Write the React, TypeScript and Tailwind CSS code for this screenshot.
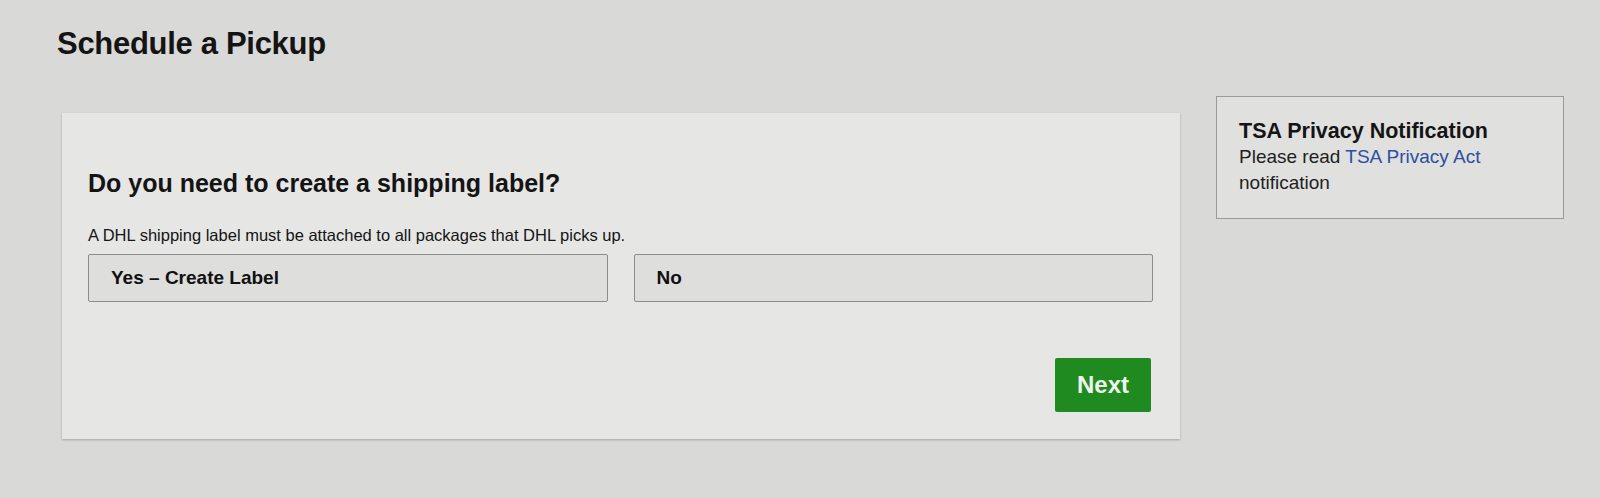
import React from 'react';

const App: React.FC = () => {
  return (
    <div className="min-h-[498px] w-[1600px] bg-[#d9d9d7] font-['Liberation_Sans',Arial,sans-serif] text-[#141414] pl-[57px] pt-[27px]">
      <h1 className="text-[31px] leading-[34px] font-bold tracking-[-0.3px]">Schedule a Pickup</h1>

      <div className="flex items-start mt-[35px]">
        {/* Main question card */}
        <div className="ml-[5px] mt-[17px] w-[1118px] bg-[#e6e6e5] shadow-[0_1px_2px_rgba(0,0,0,0.25)] pl-[26px] pr-[27px] pt-[55px] pb-[27px]">
          <h2 className="text-[25px] leading-[30px] font-bold">Do you need to create a shipping label?</h2>
          <p className="mt-[27px] text-[16.5px] leading-[20px]">
            A DHL shipping label must be attached to all packages that DHL picks up.
          </p>

          <div className="mt-[9px] grid grid-cols-2 gap-[26px]">
            <button className="h-[48px] text-left pl-[22px] bg-[#dededd] border border-[#8c8c8c] rounded-[2px] text-[19px] font-bold text-[#111]">
              Yes – Create Label
            </button>
            <button className="h-[48px] text-left pl-[22px] bg-[#dededd] border border-[#8c8c8c] rounded-[2px] text-[19px] font-bold text-[#111]">
              No
            </button>
          </div>

          <div className="mt-[56px] flex justify-end pr-[2px]">
            <button className="w-[96px] h-[54px] bg-[#1f8a1f] rounded-[2px] text-[24px] font-bold text-[#eef3ec]">
              Next
            </button>
          </div>
        </div>

        {/* TSA notice */}
        <div className="ml-[36px] w-[348px] border border-[#9a9a9a] bg-[#e0e0df] pl-[22px] pr-[22px] pt-[21px] pb-[22px]">
          <h3 className="text-[21.5px] leading-[26px] font-bold">TSA Privacy Notification</h3>
          <p className="text-[19px] leading-[26px] text-[#1e1e1e]">
            Please read <a href="#" className="text-[#2d4f9e]">TSA Privacy Act</a> notification
          </p>
        </div>
      </div>
    </div>
  );
};

export default App;
